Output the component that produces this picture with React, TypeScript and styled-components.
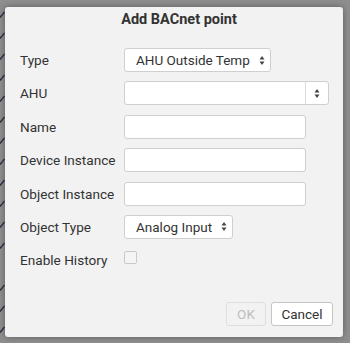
import React from 'react';
import styled, { createGlobalStyle } from 'styled-components';

const GlobalStyle = createGlobalStyle`
  html, body {
    margin: 0;
    padding: 0;
    width: 350px;
    height: 343px;
    overflow: hidden;
    background: #8e8e8e;
  }
  * {
    box-sizing: border-box;
  }
`;

const Screen = styled.div`
  position: relative;
  width: 350px;
  height: 343px;
  background: #8e8e8e;
  font-family: Roboto, 'Liberation Sans', sans-serif;
  overflow: hidden;
`;

const BackList = styled.div`
  display: flex;
  flex-direction: column;
  padding-top: 4px;
`;

const BackRow = styled.div`
  height: 21px;
  display: flex;
  align-items: center;
  margin-left: -2px;
`;

const Dialog = styled.div`
  position: absolute;
  left: 5px;
  top: 7px;
  width: 338px;
  height: 330px;
  background: #f2f2f2;
  border-radius: 3px;
  box-shadow: 0 0 6px rgba(0, 0, 0, 0.35);
  display: flex;
  flex-direction: column;
  padding: 5px 10px 11px 15px;
`;

const Title = styled.div`
  text-align: center;
  font-size: 14.5px;
  font-weight: 700;
  line-height: 16px;
  color: #333;
  padding-left: 5px;
`;

const Form = styled.div`
  display: grid;
  grid-template-columns: 104px 1fr;
  grid-auto-rows: 24px;
  row-gap: 9.4px;
  margin-top: 20px;
  align-items: center;
`;

const Label = styled.div`
  font-size: 13.6px;
  color: #333;
  line-height: 24px;
  white-space: nowrap;
`;

const Field = styled.div<{ $w: number }>`
  width: ${(p) => p.$w}px;
  height: 24px;
  background: #fff;
  border: 1px solid #cfcfcf;
  border-radius: 3px;
  display: flex;
  align-items: center;
  font-size: 13.5px;
  color: #333;
`;

const SelectText = styled.span`
  flex: 1;
  padding-left: 11px;
  white-space: nowrap;
`;

const ArrowBox = styled.div<{ $divider?: boolean }>`
  width: ${(p) => (p.$divider ? 23 : 17)}px;
  height: 100%;
  display: flex;
  align-items: center;
  justify-content: center;
  border-left: ${(p) => (p.$divider ? '1px solid #dcdcdc' : 'none')};
`;

const Checkbox = styled.div`
  width: 13px;
  height: 13px;
  border: 1px solid #c9c9c9;
  border-radius: 2px;
  background: #f4f4f4;
  margin-top: -5px;
`;

const Footer = styled.div`
  margin-top: auto;
  display: flex;
  justify-content: flex-end;
  gap: 5px;
`;

const Button = styled.div<{ $disabled?: boolean }>`
  height: 24px;
  padding: 0 9px;
  min-width: ${(p) => (p.$disabled ? 40 : 62)}px;
  display: flex;
  align-items: center;
  justify-content: center;
  font-size: 13.5px;
  border-radius: 3px;
  border: 1px solid ${(p) => (p.$disabled ? '#dedede' : '#c4c4c4')};
  background: ${(p) => (p.$disabled ? '#f2f2f2' : '#fff')};
  color: ${(p) => (p.$disabled ? '#bdbdbd' : '#333')};
`;

const Arrows = () => (
  <svg width="6" height="11" viewBox="0 0 6 11">
    <path d="M3 1 L5.5 4.5 L0.5 4.5 Z" fill="#444" />
    <path d="M3 10 L5.5 6.5 L0.5 6.5 Z" fill="#444" />
  </svg>
);

const Check = () => (
  <svg width="7" height="7" viewBox="0 0 7 7">
    <path d="M0.5 4 L2.5 6 L6.5 1" stroke="#2a2f45" strokeWidth="1.3" fill="none" />
  </svg>
);

const backRows = Array.from({ length: 16 }, (_, i) => i);

const App = () => {
  return (
    <Screen>
      <GlobalStyle />
      <BackList>
        {backRows.map((i) => (
          <BackRow key={i}>{i === 12 ? null : <Check />}</BackRow>
        ))}
      </BackList>
      <Dialog>
        <Title>Add BACnet point</Title>
        <Form>
          <Label>Type</Label>
          <Field $w={147}>
            <SelectText>AHU Outside Temp</SelectText>
            <ArrowBox>
              <Arrows />
            </ArrowBox>
          </Field>

          <Label>AHU</Label>
          <Field $w={205}>
            <SelectText />
            <ArrowBox $divider>
              <Arrows />
            </ArrowBox>
          </Field>

          <Label>Name</Label>
          <Field $w={182} />

          <Label>Device Instance</Label>
          <Field $w={182} />

          <Label>Object Instance</Label>
          <Field $w={182} />

          <Label>Object Type</Label>
          <Field $w={109}>
            <SelectText>Analog Input</SelectText>
            <ArrowBox>
              <Arrows />
            </ArrowBox>
          </Field>

          <Label>Enable History</Label>
          <Checkbox />
        </Form>
        <Footer>
          <Button $disabled>OK</Button>
          <Button>Cancel</Button>
        </Footer>
      </Dialog>
    </Screen>
  );
};

export default App;
